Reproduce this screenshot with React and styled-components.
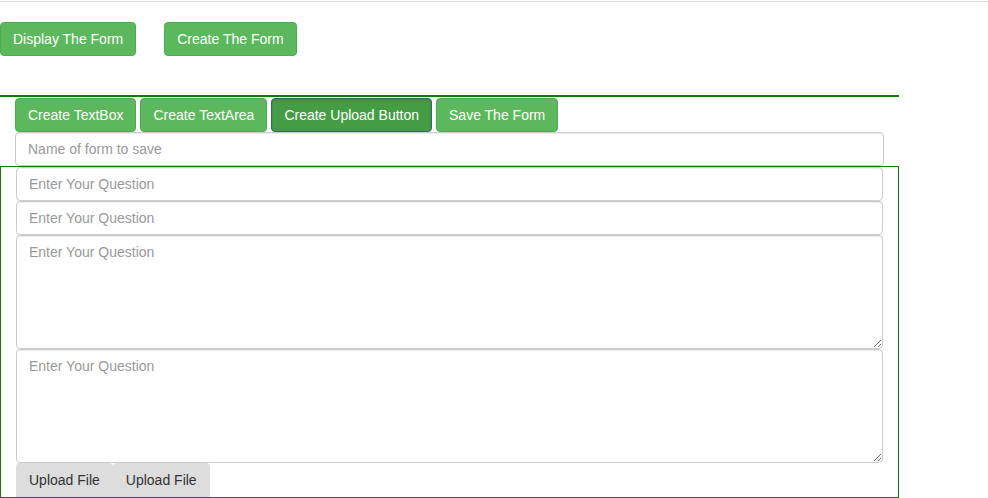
import React from 'react';
import styled, { createGlobalStyle } from 'styled-components';

const GlobalStyle = createGlobalStyle`
  * { box-sizing: border-box; }
  body {
    margin: 0;
    background: #fff;
    font-family: "Liberation Sans", Arial, sans-serif;
    font-size: 14px;
    color: #333;
  }
`;

function App() {
  return (
    <Page>
      <GlobalStyle />
      <TopRule />

      <MainActions>
        <Button>Display The Form</Button>
        <Button>Create The Form</Button>
      </MainActions>

      <Builder>
        <Toolbar>
          <Button>Create TextBox</Button>
          <Button>Create TextArea</Button>
          <Button active>Create Upload Button</Button>
          <Button>Save The Form</Button>
        </Toolbar>
        <NameInput placeholder="Name of form to save" />
      </Builder>

      <FormArea>
        <Field placeholder="Enter Your Question" />
        <Field placeholder="Enter Your Question" />
        <Area placeholder="Enter Your Question" />
        <Area placeholder="Enter Your Question" />
        <UploadRow>
          <UploadBtn>Upload File</UploadBtn>
          <UploadBtn>Upload File</UploadBtn>
        </UploadRow>
      </FormArea>
    </Page>
  );
}

export default App;

const Page = styled.div`
  width: 988px;
  height: 498px;
  overflow: hidden;
`;

const TopRule = styled.div`
  margin-top: 1px;
  height: 1px;
  width: 100%;
  background: #d9d9d9;
`;

const MainActions = styled.div`
  display: flex;
  gap: 28px;
  padding-top: 20px;
  height: 95px;
  border-bottom: 2px solid #0b7a0b;
  width: 899px;
`;

const Button = styled.button`
  height: 34px;
  padding: 6px 12px;
  font-family: "Liberation Sans", Arial, sans-serif;
  font-size: 14px;
  line-height: 20px;
  color: #fff;
  background-color: ${p => (p.active ? '#449d44' : '#5cb85c')};
  border: 1px solid ${p => (p.active ? '#2e6b63' : '#4cae4c')};
  border-radius: 4px;
  box-shadow: ${p => (p.active ? 'inset 0 1px 3px rgba(0,0,0,0.15)' : 'none')};
  cursor: pointer;
  white-space: nowrap;
`;

const Builder = styled.div`
  padding-left: 15px;
  width: 899px;
`;

const Toolbar = styled.div`
  display: flex;
  gap: 4px;
  margin-top: 1px;
`;

const inputBase = `
  display: block;
  font-family: "Liberation Sans", Arial, sans-serif;
  font-size: 14px;
  line-height: 20px;
  color: #555;
  padding: 6px 12px;
  border: 1px solid #ccc;
  border-radius: 4px;
  background: #fff;
  outline: none;
  box-shadow: inset 0 1px 1px rgba(0,0,0,0.075);
  &::placeholder { color: #999; }
`;

const NameInput = styled.input`
  ${inputBase}
  width: 869px;
  height: 34px;
`;

const FormArea = styled.div`
  width: 899px;
  height: 332px;
  border: 1px solid #0b7a0b;
  padding: 0 14px 0 15px;
`;

const Field = styled.input`
  ${inputBase}
  width: 867px;
  height: 34px;
`;

const Area = styled.textarea`
  ${inputBase}
  width: 867px;
  height: 114px;
  resize: vertical;
`;

const UploadRow = styled.div`
  display: flex;
`;

const UploadBtn = styled.button`
  height: 34px;
  padding: 6px 13px;
  font-family: "Liberation Sans", Arial, sans-serif;
  font-size: 14px;
  line-height: 20px;
  color: #333;
  background: #ddd;
  border: none;
  border-radius: 4px 4px 0 0;
`;
